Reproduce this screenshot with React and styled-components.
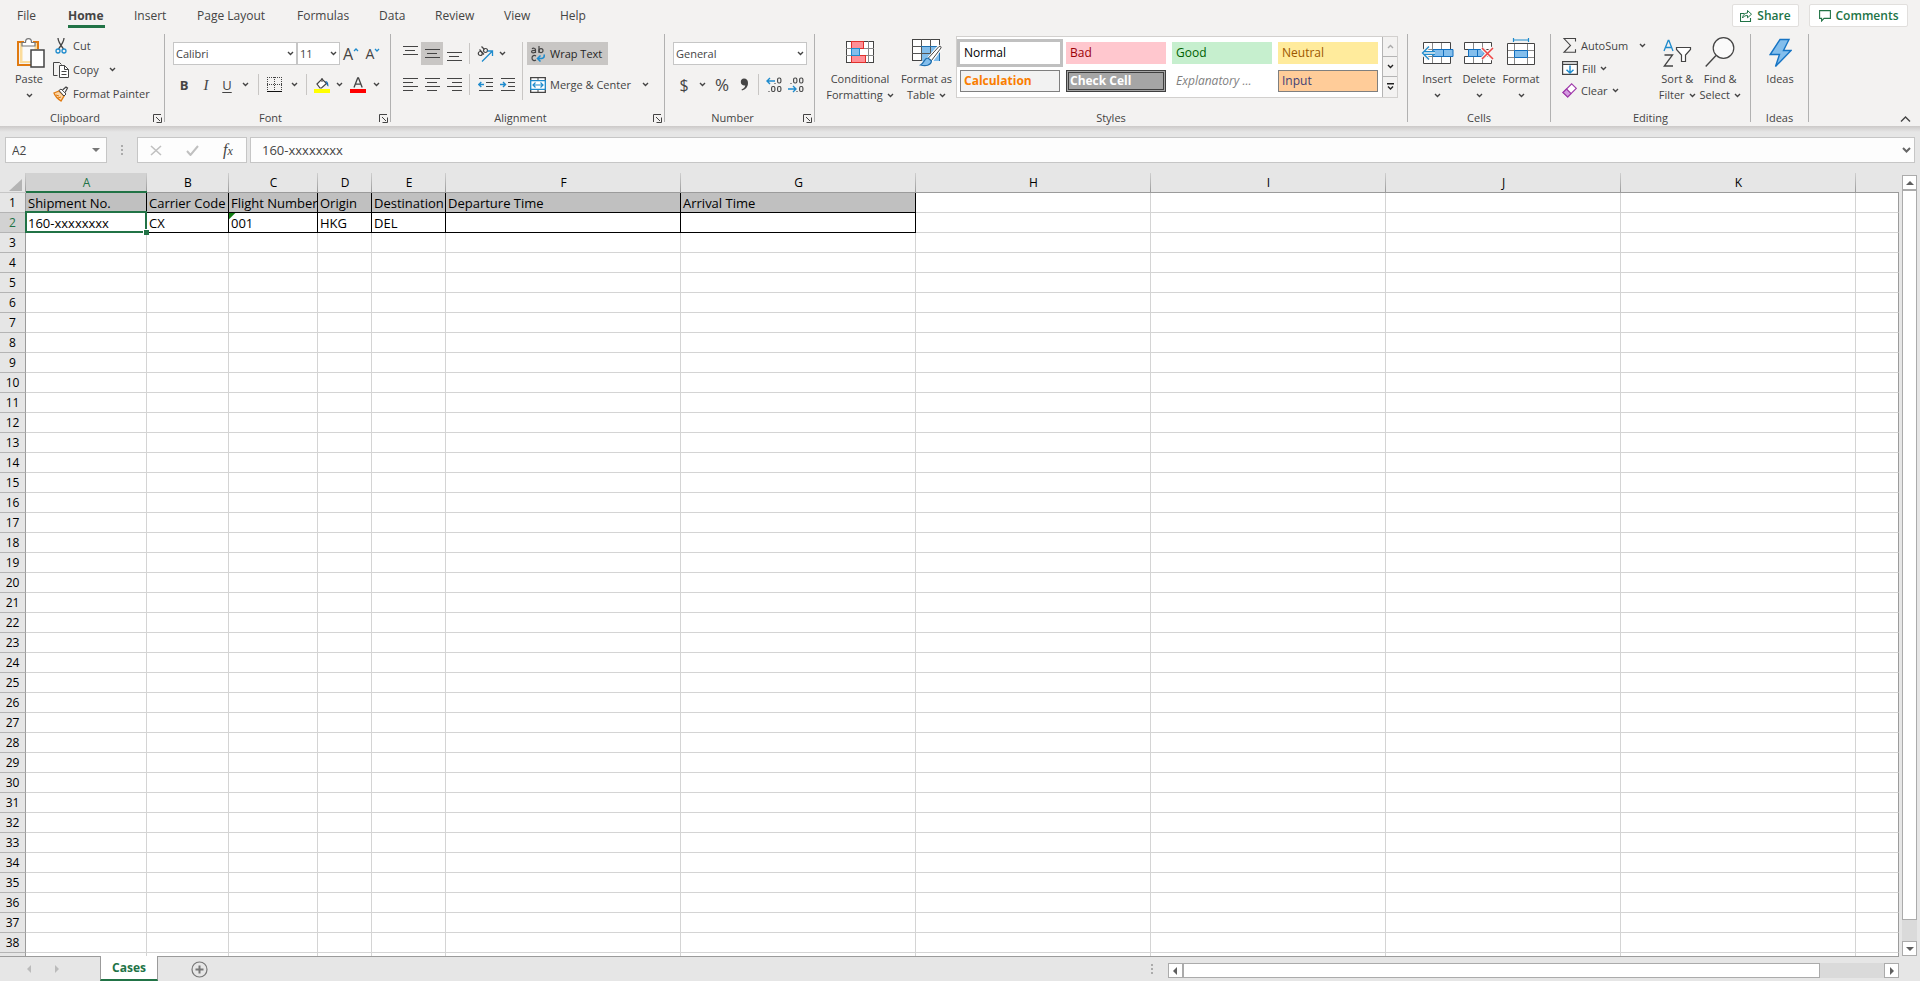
import React from 'react';
import styled, { createGlobalStyle, css } from 'styled-components';

const Global = createGlobalStyle`
  *, *::before, *::after { box-sizing: border-box; }
  html, body { margin: 0; padding: 0; }
  body, button, input, select {
    font-family: "Open Sans", "Noto Sans", sans-serif;
    font-size: 11px;
    color: #444;
  }
  button { background: none; border: 0; padding: 0; margin: 0; }
  svg { display: block; flex: none; }
`;

const INK = '#444444';
const GREEN = '#217346';
const BLUE = '#1e8bcd';

const Shell = styled.div`
  display: flex;
  flex-direction: column;
  height: 100vh;
  overflow: hidden;
  background: #e6e6e6;
`;

const Ribbon = styled.header`
  background: #f3f2f1;
  flex: none;
`;

const TopBar = styled.div`
  display: flex;
  height: 34px;
  padding: 4px 12px 0 0;
  justify-content: space-between;
`;

const Tabs = styled.nav`
  display: flex;
  gap: 29px;
  padding-left: 17px;
`;

const TabButton = styled.button`
  height: 24px;
  padding-top: 3px;
  font-size: 12px;
  line-height: 18px;
  width: ${(p) => p.$w}px;
  white-space: nowrap;
  text-align: left;
  border-bottom: 3px solid ${(p) => (p.$active ? GREEN : 'transparent')};
  font-weight: ${(p) => (p.$active ? 700 : 400)};
`;

const TopActions = styled.div`
  display: flex;
  gap: 10px;
`;

const ActionButton = styled.button`
  display: flex;
  align-items: center;
  justify-content: center;
  gap: 5px;
  width: ${(p) => p.$w}px;
  height: 23px;
  background: #fff;
  border: 1px solid #e1dfdd;
  border-radius: 2px;
  color: ${GREEN};
  font-size: 12px;
  font-weight: 600;
`;

const RibbonBody = styled.div`
  display: flex;
  height: 92px;
`;

const GroupBox = styled.section`
  display: flex;
  flex-direction: column;
  flex: none;
  width: ${(p) => p.$w}px;
  background: linear-gradient(#b1b1b1, #b1b1b1) right top / 1px 88px no-repeat;
`;

const GroupBody = styled.div`
  display: flex;
  height: 76px;
  padding: ${(p) => p.$pad || '0'};
`;

const GroupFooter = styled.div`
  display: flex;
  align-items: center;
  height: 16px;
  padding-right: 1px;
`;

const GroupLabel = styled.span`
  flex: 1;
  text-align: center;
  line-height: 16px;
`;

const Launcher = styled.button`
  width: 14px;
  height: 14px;
  display: grid;
  place-items: center;
`;

const Column = styled.div`
  display: flex;
  flex-direction: column;
  align-items: flex-start;
  gap: ${(p) => p.$gap || 0}px;
`;

const Row = styled.div`
  display: flex;
  align-items: center;
  height: 23px;
`;

const Tool = styled.button`
  display: flex;
  align-items: center;
  justify-content: ${(p) => (p.$start ? 'flex-start' : 'center')};
  gap: 4px;
  height: ${(p) => p.$h || 23}px;
  width: ${(p) => (p.$w ? p.$w + 'px' : 'auto')};
  padding-left: ${(p) => p.$pl || 0}px;
  white-space: nowrap;
  background: ${(p) => (p.$on ? '#c8c6c4' : 'transparent')};
  ${(p) => p.$on && css`color: #262626;`}
`;

const Glyph = styled.span`
  font-size: ${(p) => p.$size || 13}px;
  line-height: 18px;
  font-weight: ${(p) => (p.$bold ? 700 : 400)};
  font-style: ${(p) => (p.$italic ? 'italic' : 'normal')};
  font-family: ${(p) => (p.$serif ? '"Liberation Serif", serif' : 'inherit')};
  text-decoration: ${(p) => (p.$under ? 'underline' : 'none')};
  text-underline-offset: 2px;
`;

const Divider = styled.span`
  flex: none;
  width: 1px;
  height: ${(p) => p.$h || 21}px;
  background: #c8c6c4;
  margin: ${(p) => p.$m || '0'};
`;

const BigTool = styled.button`
  display: flex;
  flex-direction: column;
  align-items: center;
  width: ${(p) => p.$w}px;
  height: 74px;
  line-height: 16px;
  white-space: nowrap;
`;

const BigIcon = styled.span`
  display: grid;
  place-items: center;
  height: 37px;
`;

const LabelLine = styled.span`
  display: flex;
  align-items: center;
  gap: 4px;
  height: 16px;
`;

const SelectWrap = styled.div`
  display: grid;
  align-items: center;
  width: ${(p) => p.$w}px;
  height: 23px;
  background: #fff;
  border: 1px solid #c6c6c6;
  & > * { grid-area: 1 / 1; }
  & > svg { justify-self: end; margin-right: 2px; pointer-events: none; }
`;

const Select = styled.select`
  appearance: none;
  border: 0;
  background: transparent;
  width: 100%;
  height: 21px;
  padding: 0 14px 0 2px;
  line-height: 21px;
`;

const Gallery = styled.div`
  display: flex;
  height: 62px;
  margin-top: 2px;
  background: #fff;
  border: 1px solid #d2d0ce;
`;

const Swatches = styled.div`
  display: grid;
  grid-template-columns: repeat(4, 100px);
  grid-auto-rows: 22px;
  gap: 6px;
  padding: 5px 4px 0 3px;
`;

const Swatch = styled.button`
  text-align: left;
  padding-left: 3px;
  font-size: 12px;
  line-height: 18px;
  color: ${(p) => p.$fg};
  background: ${(p) => p.$bg};
  border: ${(p) => p.$border || '1px solid transparent'};
  font-weight: ${(p) => (p.$bold ? 700 : 400)};
  font-style: ${(p) => (p.$italic ? 'italic' : 'normal')};
  ${(p) => p.$double && css`
    box-shadow: inset 0 0 0 1px #a5a5a5, inset 0 0 0 2px #3f3f3f;
  `}
  ${(p) => p.$selected && css`outline: 3px solid #c0c0c0;`}
`;

const GalleryScroll = styled.div`
  display: grid;
  grid-template-rows: 20px 20px 20px;
  width: 15px;
`;

const GalleryButton = styled.button`
  display: grid;
  place-items: center;
  background: #f3f2f1;
  border-left: 1px solid #b4b4b4;
  border-bottom: 1px solid #b4b4b4;
  &:last-child { border-bottom: 0; }
`;

const Collapse = styled.button`
  margin: auto 8px 2px auto;
  width: 12px;
  height: 10px;
`;

const Shade = styled.div`
  flex: none;
  height: 11px;
  background: linear-gradient(#cbc9c8, #e6e6e6 6px);
`;

const FormulaRow = styled.div`
  display: flex;
  align-items: center;
  flex: none;
  height: 26px;
  padding: 0 5px;
`;

const Box = styled.div`
  display: flex;
  align-items: center;
  height: 26px;
  background: #fdfdfd;
  border: 1px solid #c6c6c6;
  ${(p) => (p.$w ? css`width: ${p.$w}px; flex: none;` : css`flex: 1;`)}
  justify-content: ${(p) => (p.$spread ? 'space-around' : 'flex-start')};
`;

const TextField = styled.input`
  flex: 1;
  min-width: 0;
  height: 24px;
  border: 0;
  outline: 0;
  background: transparent;
  font-size: ${(p) => p.$size || 12}px;
  padding: 0 0 0 ${(p) => p.$pl}px;
`;

const Handle = styled.span`
  flex: none;
  display: grid;
  place-items: center;
  width: ${(p) => p.$w || 31}px;
`;

const Workspace = styled.main`
  display: flex;
  flex: 1;
  min-height: 0;
  padding-top: 10px;
`;

const GridPane = styled.div`
  flex: 1;
  min-width: 0;
  overflow: hidden;
`;

const Sheet = styled.table`
  width: 100%;
  table-layout: fixed;
  border-collapse: separate;
  border-spacing: 0;
  font-size: 13px;
  color: #000;
`;

const ColHead = styled.th`
  height: 20px;
  padding: 0;
  font-weight: 400;
  font-size: 12px;
  line-height: 18px;
  color: ${(p) => (p.$on ? GREEN : '#000')};
  border-bottom: 1px solid #9b9b9b;
  background: linear-gradient(#cfcfcf, #9b9b9b) right top / ${(p) => (p.$last ? 0 : 1)}px 100% no-repeat #e6e6e6;
  ${(p) => p.$on && css`
    background-color: #d2d2d2;
    border-bottom: 2px solid ${GREEN};
    line-height: 17px;
  `}
`;

const Corner = styled.td`
  padding: 4px 3px 0 9px;
  background: linear-gradient(#cfcfcf, #9b9b9b) right top / 1px 100% no-repeat;
  border-bottom: 1px solid #c6c6c6;
`;

const RowHead = styled.th`
  height: 20px;
  padding: 1px 0 0;
  font-weight: 400;
  font-size: 12px;
  line-height: 18px;
  background: ${(p) => (p.$on ? '#d2d2d2' : '#e6e6e6')};
  color: ${(p) => (p.$on ? GREEN : '#000')};
  border-right: 1px solid #9b9b9b;
  border-bottom: 1px solid #b4b4b4;
`;

const Cell = styled.td`
  height: 20px;
  padding: 2px 0 0 2px;
  line-height: 17px;
  white-space: nowrap;
  overflow: hidden;
  background: ${(p) => (p.$head ? '#c0c0c0' : '#fff')};
  border-right: 1px solid ${(p) => (p.$box ? '#000' : p.$last ? '#9b9b9b' : '#d4d4d4')};
  border-bottom: 1px solid ${(p) => (p.$box ? '#000' : '#d4d4d4')};
  ${(p) => p.$flag && css`
    background: linear-gradient(135deg, #107c10 4px, transparent 5px) #fff;
  `}
  ${(p) => p.$selected && css`
    position: relative;
    overflow: visible;
    &::before {
      content: '';
      position: absolute;
      inset: -2px -1px -1px -1px;
      border: 2px solid ${GREEN};
    }
    &::after {
      content: '';
      position: absolute;
      right: -3px;
      bottom: -3px;
      width: 6px;
      height: 6px;
      background: ${GREEN};
      border-top: 1px solid #fff;
      border-left: 1px solid #fff;
    }
  `}
`;

const VScroll = styled.div`
  display: flex;
  flex-direction: column;
  flex: none;
  width: 15px;
  margin: 2px 3px 0 3px;
  background: #dadada;
`;

const ScrollButton = styled.button`
  display: grid;
  place-items: center;
  flex: none;
  width: 15px;
  height: 15px;
  background: #fff;
  border: 1px solid #ababab;
`;

const Thumb = styled.div`
  flex: ${(p) => p.$grow} 0 0;
  background: #fff;
  border: 1px solid #ababab;
`;

const Track = styled.div`
  flex: ${(p) => p.$grow} 0 0;
`;

const SheetBar = styled.footer`
  display: flex;
  flex: none;
  height: 25px;
`;

const SheetBarMain = styled.div`
  display: flex;
  flex: 1;
  border-top: 1px solid #9b9b9b;
`;

const SheetNav = styled.div`
  display: flex;
  align-items: center;
  gap: 16px;
  width: 100px;
  padding-left: 23px;
`;

const NavButton = styled.button`
  width: 12px;
  height: 16px;
  display: grid;
  place-items: center;
`;

const SheetTab = styled.button`
  width: 58px;
  margin-top: -1px;
  background: #fff;
  color: ${GREEN};
  font-size: 12px;
  font-weight: 700;
  border-left: 1px solid #9b9b9b;
  border-right: 1px solid #9b9b9b;
  border-bottom: 2px solid ${GREEN};
`;

const AddSheet = styled.button`
  display: grid;
  place-items: center;
  width: 18px;
  margin-left: 32px;
`;

const Grip = styled.span`
  display: grid;
  place-items: center;
  width: 9px;
  margin-left: auto;
  margin-right: 11px;
`;

const HScroll = styled.div`
  display: flex;
  width: 38.5%;
  height: 15px;
  margin: 6px 0 0;
  background: #dadada;
`;

const BarEnd = styled.div`
  width: 21px;
  flex: none;
`;

/* ---------- icons ---------- */

const Svg = ({ w, h, children, ...rest }) => (
  <svg width={w} height={h} viewBox={`0 0 ${w} ${h}`} fill="none" aria-hidden="true" {...rest}>
    {children}
  </svg>
);

const Chevron = ({ color = INK }) => (
  <Svg w={7} h={5}>
    <path d="M1 1l2.5 2.5L6 1" stroke={color} strokeWidth="1.4" />
  </Svg>
);

const LauncherIcon = () => (
  <Svg w={9} h={9}>
    <path d="M.5 8V.5H8M3 3l4 4M8.5 3.5v5h-5" stroke={INK} />
  </Svg>
);

const PasteIcon = () => (
  <Svg w={32} h={32}>
    <g transform="translate(4 0)">
      <path d="M3 6h17v7h-6v13H3z" fill="#fbdc9c" />
      <path d="M5.500 8h12v5H14v11H5.500z" fill="#fafafa" />
      <path d="M7 5H1v23h13M16 5h5v7" stroke="#e07a10" strokeWidth="2" />
      <path d="M5 9V5.500h3.500C8.500 3 10 1.700 11.500 1.700S14.500 3 14.500 5.500H18V9z" fill="#fff" stroke="#777" strokeWidth="1.200" />
      <path d="M14 13h13v17H14z" fill="#fff" stroke={INK} strokeWidth="1.500" />
    </g>
  </Svg>
);

const CutIcon = () => (
  <Svg w={16} h={16}>
    <path d="M5 0c0 3 1 5 5.500 11M11 0c0 3-1 5-5.500 11" stroke={INK} strokeWidth="1.300" />
    <circle cx="5" cy="13" r="2" stroke={BLUE} strokeWidth="1.300" />
    <circle cx="11" cy="13" r="2" stroke={BLUE} strokeWidth="1.300" />
  </Svg>
);

const CopyIcon = () => (
  <Svg w={16} h={16}>
    <path d="M4.500 13.500H.5V.5h6l2 2" stroke={INK} />
    <path d="M6.500 3.500h5l4 4v8h-9z" fill="#fff" stroke={INK} />
    <path d="M11.500 3.500v4h4M8.500 9.500h5M8.500 12.500h5" stroke={INK} />
  </Svg>
);

const PainterIcon = () => (
  <Svg w={16} h={16}>
    <path d="M1 7l5-2 5 5-3 5C5 13 2 10 1 7z" fill="#fbd5a5" stroke="#e07a10" strokeWidth="1.300" />
    <path d="M3 9l3 1M5 12l3-1" stroke="#e07a10" />
    <path d="M6 4.500l2-1.500 5 5-2 2z" fill="#fff" stroke={INK} />
    <path d="M9.500 4L13 1l1.500 1L12 6.500" fill="#fff" stroke={INK} strokeWidth="1.200" />
  </Svg>
);

const Caret = ({ up }) => (
  <Svg w={6} h={14}>
    <path d={up ? 'M1 4l2-2 2 2' : 'M1 2l2 2 2-2'} stroke={BLUE} strokeWidth="1.300" />
  </Svg>
);

const BorderIcon = () => (
  <Svg w={15} h={15} shapeRendering="crispEdges">
    <path d="M0 .5h15M.5 0v14M14.500 0v14M7.500 0v14M0 7.500h15" stroke={INK} strokeDasharray="1 1" />
    <path d="M0 14.500h15" stroke="#111" />
  </Svg>
);

const FillIcon = () => (
  <Svg w={16} h={16}>
    <path d="M3 7l5-5 4.500 4.500-5 4.500H6z" fill="#fff" stroke={INK} strokeWidth="1.200" />
    <path d="M8 1v4" stroke={INK} />
    <path d="M11 4c2 0 3.500 1 3.500 5.500-1.500-.5-2-2-2.200-4z" fill="#1e6fb0" />
    <path d="M0 12h16v4H0z" fill="#ffff00" />
  </Svg>
);

const FontColorIcon = () => (
  <Svg w={16} h={16}>
    <path d="M4 10.500L7.700 1h.8l3.700 9.500M5.300 7.200h5.600" stroke={INK} strokeWidth="1.300" />
    <path d="M0 12h16v4H0z" fill="#ff0000" />
  </Svg>
);

const Lines = ({ rows, w = 15, h = 15 }) => (
  <Svg w={w} h={h} shapeRendering="crispEdges">
    {rows.map(([x, y, len]) => (
      <path key={y} d={`M${x} ${y}.5h${len}`} stroke={INK} />
    ))}
  </Svg>
);

const OrientIcon = () => (
  <Svg w={17} h={16}>
    <g stroke={INK} strokeWidth="1.200">
      <circle cx="3.300" cy="7.500" r="2" />
      <path d="M2.500 3.500l4.500 5" />
      <circle cx="8.500" cy="4.500" r="2" />
      <path d="M4.500.5l3 3" />
    </g>
    <path d="M5 15.500L15.500 5M10.500 5h5v5" stroke={BLUE} strokeWidth="1.300" />
  </Svg>
);

const IndentIcon = ({ right }) => (
  <Svg w={15} h={15}>
    <path d="M1 1.500h14M8 5.500h7M8 9.500h7M1 13.500h14" stroke={INK} />
    <path d={right ? 'M0 7.500h5.500M3 5l2.500 2.500L3 10' : 'M6 7.500H.8M3.300 5L.8 7.500 3.300 10'} stroke={BLUE} strokeWidth="1.400" />
  </Svg>
);

const WrapIcon = () => (
  <Svg w={15} h={16}>
    <g stroke={INK} strokeWidth="1.200">
      <path d="M1 2.800C2 1.800 4.500 2 4.500 3.800V7M4.500 4.500C1 4.300.6 5 .6 5.700c0 1.500 3 1.500 3.900 0" />
      <path d="M8 0v7" />
      <ellipse cx="10" cy="4.700" rx="2" ry="2" />
      <path d="M5 10C3.500 9 1 9.300 1 12s2.500 3 4 2" />
    </g>
    <path d="M13 8.500c1 3-1 4.500-6 4M9.500 9.500L6.500 12.500l3 3" stroke={BLUE} strokeWidth="1.500" />
  </Svg>
);

const MergeIcon = () => (
  <Svg w={16} h={16}>
    <path d="M.7.7h14.600v14.600H.7z" fill="#fff" stroke={INK} strokeWidth="1.300" />
    <path d="M8 0v4M8 12v4" stroke={INK} />
    <path d="M.7 3.700h14.600v8.600H.7z" fill="#fff" stroke={BLUE} strokeWidth="1.300" />
    <path d="M3 8h10M5.500 5.500L3 8l2.500 2.500M10.500 5.500L13 8l-2.500 2.500" stroke={BLUE} strokeWidth="1.200" />
  </Svg>
);

const DecimalIcon = ({ less }) => (
  <Svg w={16} h={16}>
    <g stroke={INK} strokeWidth="1.100">
      {less ? (
        <>
          <rect x="5.600" y="1" width="3.300" height="5" rx="1.400" />
          <rect x="11.600" y="1" width="3.300" height="5" rx="1.400" />
          <rect x="11.600" y="9.500" width="3.300" height="5" rx="1.400" />
          <path d="M3 6v1M9 14v1" />
        </>
      ) : (
        <>
          <rect x="11.600" y="1" width="3.300" height="5" rx="1.400" />
          <rect x="5.600" y="9.500" width="3.300" height="5" rx="1.400" />
          <rect x="11.600" y="9.500" width="3.300" height="5" rx="1.400" />
          <path d="M3 14v1M9 6v1" />
        </>
      )}
    </g>
    <path
      d={less ? 'M0 12h8M5 9l3 3-3 3' : 'M9 4H1M4 1L1 4l3 3'}
      stroke={BLUE}
      strokeWidth="1.400"
    />
  </Svg>
);

const CommaIcon = () => (
  <Svg w={9} h={13}>
    <path d="M4 .5C6.500.5 8 2 8 5c0 4-2.500 6.500-6 7.500l-.5-1C3.500 10.500 5 9.500 5.300 7.500 3 8 .8 6.500.8 4 .8 2 2 .5 4 .5z" fill={INK} />
  </Svg>
);

const CondIcon = () => (
  <Svg w={28} h={23} shapeRendering="crispEdges">
    <path d="M.5.5h27v21H.5z" fill="#fff" stroke={INK} />
    <path d="M0 7.500h28M0 14.500h28M5.500 0v22M22.500 0v22" stroke="#888" />
    <path d="M5.500.5h12v7h-12zM5.500 14.500h14v7h-14z" fill="#ff8f96" stroke="#e0312c" />
    <path d="M5.500 7.500h8v7h-8z" fill="#83beec" stroke={BLUE} />
  </Svg>
);

const TableIcon = () => (
  <Svg w={30} h={28}>
    <g shapeRendering="crispEdges">
      <path d="M.5.5h27v21H.5z" fill="#fff" stroke={INK} />
      <path d="M9 7h19v15H9z" fill="#83beec" />
      <path d="M0 7.500h28M0 14.500h28M9.500 0v22M18.500 0v22" stroke="#555" />
      <path d="M9 7.500h18.500v14" stroke="#1e6fb0" />
    </g>
    <path d="M16 20L27 7.500c1.500-.8 2.500 0 2 1.500L19.500 22z" fill="#fff" stroke="#fff" strokeWidth="3" />
    <path d="M16 19.500L27 7.500c1.500-.8 2.500 0 2 1.500L19.500 21.500z" fill="#fff" stroke={INK} />
    <path d="M16 19c-4 0-3.500 5-7.500 7 5 1.500 10.500.5 11-4z" fill="#83beec" stroke="#1e6fb0" strokeWidth="1.200" />
  </Svg>
);

const InsertIcon = () => (
  <Svg w={33} h={28}>
    <path d="M2.500 3.500h27v21h-27z" fill="#fff" stroke={INK} />
    <path d="M11.500 4v20M20.500 4v20M3 10.500h27M3 17.500h27" stroke="#888" />
    <path d="M12 10.500h20v7H12zM22.500 10.500v7" fill="#83beec" stroke="#106ebe" />
    <path d="M14 14H1.500M7.500 7.500L1.500 14l6 6.500" stroke="#f3f2f1" strokeWidth="4" />
    <path d="M14 12.700H3M14 15.300H3M8 7.500L1.500 14l6.500 6.500" stroke={BLUE} strokeWidth="1.300" />
  </Svg>
);

const DeleteIcon = () => (
  <Svg w={31} h={28}>
    <path d="M.5 3.500h27v7H.5zM.5 17.500h27v7H.5z" fill="#fff" stroke={INK} />
    <path d="M9.500 4v6M18.500 4v6M9.500 18v6M18.500 18v6" stroke="#888" />
    <path d="M0 11h29v6H0z" fill="#f3f2f1" />
    <path d="M4.500 10.500h13l3 3.500-3 3.500h-13zM13.500 10.500v7" fill="#83beec" stroke="#106ebe" />
    <path d="M18 9l11 11M29 9L18 20" stroke="#f3f2f1" strokeWidth="4" />
    <path d="M18 9l11 11M29 9L18 20" stroke="#ee4444" strokeWidth="1.500" />
  </Svg>
);

const FormatIcon = () => (
  <Svg w={28} h={30}>
    <path d="M6.500 2h15M6.500 0v4M21.500 0v4" stroke={BLUE} strokeWidth="1.200" />
    <path d="M.5 5.500h27v21H.5z" fill="#fff" stroke={INK} />
    <path d="M7.500 6v20M20.500 6v20M1 12.500h26M1 19.500h26" stroke="#888" />
    <path d="M7.500 12.500h13v7h-13z" fill="#83beec" stroke="#106ebe" />
  </Svg>
);

const SigmaIcon = () => (
  <Svg w={15} h={15}>
    <path d="M13.500 3.500v-3H2L8.500 7.500 2 14.300h11.500v-3" stroke={INK} strokeWidth="1.100" />
  </Svg>
);

const FillDownIcon = () => (
  <Svg w={16} h={14}>
    <path d="M.6.6h14.800v12.800H.6zM0 3.300h16" fill="#fff" stroke={INK} strokeWidth="1.200" />
    <path d="M8 4.500V12M4.500 8.700L8 12l3.500-3.300" stroke={BLUE} strokeWidth="1.500" />
  </Svg>
);

const EraserIcon = () => (
  <Svg w={15} h={15}>
    <path d="M9.700.8l4.600 4.600-8.600 8.600L1 9.500z" fill="#fff" stroke="#a03cab" strokeWidth="1.200" />
    <path d="M4.500 6L9 10.600 5.700 14 1 9.500z" fill="#d49be0" stroke="#a03cab" strokeWidth="1.200" />
  </Svg>
);

const SortIcon = () => (
  <Svg w={29} h={28}>
    <path d="M1 12L5.200 1.500h.7L10 12M2.300 8.500h6.500" stroke={BLUE} strokeWidth="1.300" />
    <path d="M1.500 16h8L1.300 27h8.700" stroke={INK} strokeWidth="1.300" />
    <path d="M13.500 8.500h14v2l-5 5.500v6.500h-4V16l-5-5.500z" fill="#fff" stroke={INK} strokeWidth="1.200" />
  </Svg>
);

const FindIcon = () => (
  <Svg w={30} h={31}>
    <circle cx="18.500" cy="11" r="10.300" fill="#fafafa" stroke={INK} strokeWidth="1.200" />
    <path d="M11 18.500L.7 29.500" stroke={INK} strokeWidth="1.300" />
  </Svg>
);

const BoltIcon = () => (
  <Svg w={23} h={30}>
    <path d="M11 1.500h9L14.500 12.500H22L6.500 28.500l4-12H1.200z" fill="#83beec" stroke="#1674c4" strokeWidth="1.400" />
  </Svg>
);

const ShareIcon = () => (
  <Svg w={12} h={13}>
    <path d="M4.500 4.500h-4v8h10V9" stroke={GREEN} strokeWidth="1.100" />
    <path d="M2.500 9C3 5.500 5 4 7.500 4V1.500l4 3.700-4 3.600V6.500C5.500 6.500 4 7 2.500 9z" stroke={GREEN} />
  </Svg>
);

const CommentIcon = () => (
  <Svg w={12} h={12}>
    <path d="M.6.6h10.800v7.800H5L2.600 11V8.400h-2z" stroke={GREEN} strokeWidth="1.100" />
  </Svg>
);

const Arrow = ({ dir, color = '#5f5f5f', size = 8 }) => {
  const d = {
    up: 'M0 6l4-4 4 4z',
    down: 'M0 2l4 4 4-4z',
    left: 'M6 0L2 4l4 4z',
    right: 'M2 0l4 4-4 4z',
  }[dir];
  return (
    <svg width={size} height={size} viewBox="0 0 8 8" aria-hidden="true">
      <path d={d} fill={color} />
    </svg>
  );
};

const Dots = () => (
  <Svg w={3} h={11}>
    <path d="M0 0h2v2H0zM0 4h2v2H0zM0 8h2v2H0z" fill="#ababab" />
  </Svg>
);

/* ---------- composed parts ---------- */

const Group = ({ label, w, pad, launcher, children }) => (
  <GroupBox $w={w} aria-label={label}>
    <GroupBody $pad={pad}>{children}</GroupBody>
    <GroupFooter>
      <GroupLabel>{label}</GroupLabel>
      {launcher && (
        <Launcher aria-label={`${label} settings`}>
          <LauncherIcon />
        </Launcher>
      )}
    </GroupFooter>
  </GroupBox>
);

const Big = ({ icon, lines, arrow, w }) => (
  <BigTool $w={w}>
    <BigIcon>{icon}</BigIcon>
    {lines.map((line, i) => (
      <LabelLine key={line}>
        {line}
        {arrow === 'inline' && i === lines.length - 1 && <Chevron />}
      </LabelLine>
    ))}
    {arrow === 'below' && (
      <LabelLine>
        <Chevron />
      </LabelLine>
    )}
  </BigTool>
);

const DropTool = ({ w = 16, label }) => (
  <Tool $w={w} aria-label={label}>
    <Chevron />
  </Tool>
);

const tabs = [
  ['File', 22], ['Home', 37], ['Insert', 34], ['Page Layout', 71], ['Formulas', 53],
  ['Data', 27], ['Review', 40], ['View', 27], ['Help', 27],
];

const swatches = [
  { name: 'Normal', fg: '#000', bg: '#fff', selected: true },
  { name: 'Bad', fg: '#9c0006', bg: '#ffc7ce' },
  { name: 'Good', fg: '#006100', bg: '#c6efce' },
  { name: 'Neutral', fg: '#9c5700', bg: '#ffeb9c' },
  { name: 'Calculation', fg: '#fa7d00', bg: '#f2f2f2', border: '1px solid #7f7f7f', bold: true },
  { name: 'Check Cell', fg: '#fff', bg: '#a5a5a5', border: '1px solid #3f3f3f', bold: true, double: true },
  { name: 'Explanatory ...', fg: '#7f7f7f', bg: '#fff', italic: true },
  { name: 'Input', fg: '#3f3f76', bg: '#ffcc99', border: '1px solid #7f7f7f' },
];

const columns = [
  ['A', 121], ['B', 82], ['C', 89], ['D', 54], ['E', 74], ['F', 235], ['G', 235],
  ['H', 235], ['I', 235], ['J', 235], ['K', 235],
];

const data = [
  ['Shipment No.', 'Carrier Code', 'Flight Number', 'Origin', 'Destination', 'Departure Time', 'Arrival Time'],
  ['160-xxxxxxxx', 'CX', '001', 'HKG', 'DEL', '', ''],
];

const FULL_ROWS = 38;

const TOP_LINES = [[0, 0, 15], [2, 4, 10], [0, 8, 15]];
const LOW_LINES = [[0, 6, 15], [2, 10, 10], [0, 14, 15]];
const MID_LINES = [[0, 3, 15], [2, 7, 10], [0, 11, 15]];
const LEFT = [[0, 1, 15], [0, 5, 10], [0, 9, 15], [0, 13, 10]];
const CENTER = [[0, 1, 15], [2, 5, 10], [0, 9, 15], [2, 13, 10]];
const RIGHT = [[0, 1, 15], [5, 5, 10], [0, 9, 15], [5, 13, 10]];

const SheetGrid = () => (
  <Sheet>
    <colgroup>
      <col style={{ width: 26 }} />
      {columns.map(([name, width]) => (
        <col key={name} style={{ width }} />
      ))}
      <col />
    </colgroup>
    <thead>
      <tr>
        <Corner>
          <Svg w={13} h={12}>
            <path d="M13 0v12H0z" fill="#b4b4b4" />
          </Svg>
        </Corner>
        {columns.map(([name]) => (
          <ColHead key={name} scope="col" $on={name === 'A'}>{name}</ColHead>
        ))}
        <ColHead $last />
      </tr>
    </thead>
    <tbody>
      {Array.from({ length: FULL_ROWS + 1 }, (_, r) => (
        <tr key={r}>
          <RowHead scope="row" $on={r === 1}>{r < FULL_ROWS ? r + 1 : null}</RowHead>
          {columns.map(([name], c) => {
            const filled = r < 2 && c < 7;
            return (
              <Cell
                key={name}
                $box={filled}
                $head={filled && r === 0}
                $selected={r === 1 && c === 0}
                $flag={r === 1 && c === 2}
              >
                {filled ? data[r][c] : null}
              </Cell>
            );
          })}
          <Cell $last />
        </tr>
      ))}
    </tbody>
  </Sheet>
);

export default function App() {
  return (
    <Shell>
      <Global />
      <Ribbon>
        <TopBar>
          <Tabs>
            {tabs.map(([name, w]) => (
              <TabButton key={name} $w={w} $active={name === 'Home'}>{name}</TabButton>
            ))}
          </Tabs>
          <TopActions>
            <ActionButton $w={67}><ShareIcon />Share</ActionButton>
            <ActionButton $w={99}><CommentIcon />Comments</ActionButton>
          </TopActions>
        </TopBar>

        <RibbonBody>
          <Group label="Clipboard" w={165} pad="0 0 0 8px" launcher>
            <Big w={42} icon={<PasteIcon />} lines={['Paste']} arrow="below" />
            <Column $gap={1}>
              <Tool $pl={3} $start><CutIcon />Cut</Tool>
              <Row>
                <Tool $pl={3} $start><CopyIcon />Copy</Tool>
                <DropTool w={27} label="Copy options" />
              </Row>
              <Tool $pl={3} $start><PainterIcon />Format Painter</Tool>
            </Column>
          </Group>

          <Group label="Font" w={226} pad="8px 0 0 8px" launcher>
            <Column $gap={8}>
              <Row>
                <SelectWrap $w={124}>
                  <Select aria-label="Font name"><option>Calibri</option></Select>
                  <Chevron />
                </SelectWrap>
                <SelectWrap $w={43}>
                  <Select aria-label="Font size"><option>11</option></Select>
                  <Chevron />
                </SelectWrap>
                <Tool $w={22} aria-label="Grow font"><Row><Glyph $size={16}>A</Glyph><Caret up /></Row></Tool>
                <Tool $w={22} aria-label="Shrink font"><Row><Glyph $size={14}>A</Glyph><Caret /></Row></Tool>
              </Row>
              <Row>
                <Tool $w={22} aria-label="Bold"><Glyph $bold>B</Glyph></Tool>
                <Tool $w={22} aria-label="Italic"><Glyph $italic $serif $size={15}>I</Glyph></Tool>
                <Tool $w={20} aria-label="Underline"><Glyph $under>U</Glyph></Tool>
                <DropTool label="Underline options" />
                <Divider $m="0 4px 0 5px" />
                <Tool $w={23} aria-label="Borders"><BorderIcon /></Tool>
                <DropTool label="Border options" />
                <Divider $m="0 4px" />
                <Tool $w={22} aria-label="Fill color"><FillIcon /></Tool>
                <DropTool w={13} label="Fill color options" />
                <Tool $w={24} aria-label="Font color"><FontColorIcon /></Tool>
                <DropTool w={13} label="Font color options" />
              </Row>
            </Column>
          </Group>

          <Group label="Alignment" w={274} pad="8px 0 0 8px" launcher>
            <Column $gap={8}>
              <Row>
                <Tool $w={22} aria-label="Top align"><Lines rows={TOP_LINES} /></Tool>
                <Tool $w={22} $on aria-label="Middle align"><Lines rows={MID_LINES} /></Tool>
                <Tool $w={22} aria-label="Bottom align"><Lines rows={LOW_LINES} /></Tool>
                <Divider $m="0 4px" />
                <Tool $w={22} aria-label="Orientation"><OrientIcon /></Tool>
                <DropTool w={13} label="Orientation options" />
              </Row>
              <Row>
                <Tool $w={22} aria-label="Align left"><Lines rows={LEFT} /></Tool>
                <Tool $w={22} aria-label="Center"><Lines rows={CENTER} /></Tool>
                <Tool $w={22} aria-label="Align right"><Lines rows={RIGHT} /></Tool>
                <Divider $m="0 4px" />
                <Tool $w={22} aria-label="Decrease indent"><IndentIcon /></Tool>
                <Tool $w={22} aria-label="Increase indent"><IndentIcon right /></Tool>
              </Row>
            </Column>
            <Divider $h={58} $m="0 4px 0 4px" />
            <Column $gap={8}>
              <Row>
                <Tool $w={81} $pl={4} $start $on><WrapIcon />Wrap Text</Tool>
              </Row>
              <Row>
                <Tool $pl={3} $start><MergeIcon />Merge &amp; Center</Tool>
                <DropTool w={30} label="Merge options" />
              </Row>
            </Column>
          </Group>

          <Group label="Number" w={150} pad="8px 0 0 8px" launcher>
            <Column $gap={8}>
              <Row>
                <SelectWrap $w={134}>
                  <Select aria-label="Number format"><option>General</option></Select>
                  <Chevron />
                </SelectWrap>
              </Row>
              <Row>
                <Tool $w={22} aria-label="Currency"><Glyph $size={16}>$</Glyph></Tool>
                <DropTool w={14} label="Currency options" />
                <Tool $w={26} aria-label="Percent"><Glyph $size={17}>%</Glyph></Tool>
                <Tool $w={18} aria-label="Comma style"><CommaIcon /></Tool>
                <Divider $m="0 4px 0 5px" />
                <Tool $w={22} aria-label="Increase decimal"><DecimalIcon /></Tool>
                <Tool $w={22} aria-label="Decrease decimal"><DecimalIcon less /></Tool>
              </Row>
            </Column>
          </Group>

          <Group label="Styles" w={593} pad="0 0 0 8px">
            <Big w={74} icon={<CondIcon />} lines={['Conditional', 'Formatting']} arrow="inline" />
            <Big w={59} icon={<TableIcon />} lines={['Format as', 'Table']} arrow="inline" />
            <Gallery>
              <Swatches>
                {swatches.map((s) => (
                  <Swatch
                    key={s.name}
                    $fg={s.fg}
                    $bg={s.bg}
                    $border={s.border}
                    $bold={s.bold}
                    $italic={s.italic}
                    $double={s.double}
                    $selected={s.selected}
                  >
                    {s.name}
                  </Swatch>
                ))}
              </Swatches>
              <GalleryScroll>
                <GalleryButton aria-label="Previous styles">
                  <Svg w={7} h={5}><path d="M1 4l2.500-2.500L6 4" stroke="#aaa" strokeWidth="1.400" /></Svg>
                </GalleryButton>
                <GalleryButton aria-label="Next styles"><Chevron color="#222" /></GalleryButton>
                <GalleryButton aria-label="More styles">
                  <Svg w={7} h={8}><path d="M0 .7h7M1 3.500l2.500 2.500L6 3.500" stroke="#222" strokeWidth="1.400" /></Svg>
                </GalleryButton>
              </GalleryScroll>
            </Gallery>
          </Group>

          <Group label="Cells" w={143} pad="0 0 0 8px">
            <Big w={42} icon={<InsertIcon />} lines={['Insert']} arrow="below" />
            <Big w={42} icon={<DeleteIcon />} lines={['Delete']} arrow="below" />
            <Big w={42} icon={<FormatIcon />} lines={['Format']} arrow="below" />
          </Group>

          <Group label="Editing" w={200} pad="0 0 0 8px">
            <Column>
              <Row>
                <Tool $h={21} $pl={3} $start><SigmaIcon />AutoSum</Tool>
                <DropTool w={28} label="AutoSum options" />
              </Row>
              <Tool $h={22} $pl={3} $start><FillDownIcon />Fill<Chevron /></Tool>
              <Tool $pl={3} $start><EraserIcon />Clear<Chevron /></Tool>
            </Column>
            <Big w={42} icon={<SortIcon />} lines={['Sort &', 'Filter']} arrow="inline" />
            <Big w={44} icon={<FindIcon />} lines={['Find &', 'Select']} arrow="inline" />
          </Group>

          <Group label="Ideas" w={58} pad="0 0 0 8px">
            <Big w={42} icon={<BoltIcon />} lines={['Ideas']} />
          </Group>

          <Collapse aria-label="Collapse ribbon">
            <Svg w={11} h={8}><path d="M1 6.500L5.500 2 10 6.500" stroke={INK} strokeWidth="1.400" /></Svg>
          </Collapse>
        </RibbonBody>
      </Ribbon>

      <Shade />
      <FormulaRow>
        <Box $w={102}>
          <TextField aria-label="Name box" defaultValue="A2" $pl={6} />
          <Handle $w={20}><Arrow dir="down" color="#777" /></Handle>
        </Box>
        <Handle $w={30}><Dots /></Handle>
        <Box $w={110} $spread>
          <Tool $w={24} aria-label="Cancel">
            <Svg w={12} h={11}><path d="M1 1l10 9M11 1L1 10" stroke="#c0c0c0" strokeWidth="1.600" /></Svg>
          </Tool>
          <Tool $w={24} aria-label="Enter">
            <Svg w={13} h={11}><path d="M1 6l3.500 4L12 1" stroke="#c0c0c0" strokeWidth="2" /></Svg>
          </Tool>
          <Tool $w={24} aria-label="Insert function">
            <Glyph $serif $italic $size={16}>f<Glyph $serif $italic $size={12}>x</Glyph></Glyph>
          </Tool>
        </Box>
        <Handle $w={3} />
        <Box>
          <TextField aria-label="Formula" defaultValue="160-xxxxxxxx" $pl={11} $size={13} />
          <Handle $w={16}>
            <Svg w={9} h={6}><path d="M1 1l3.500 3.500L8 1" stroke="#666" strokeWidth="2" /></Svg>
          </Handle>
        </Box>
      </FormulaRow>

      <Workspace>
        <GridPane><SheetGrid /></GridPane>
        <VScroll>
          <ScrollButton aria-label="Scroll up"><Arrow dir="up" /></ScrollButton>
          <Thumb $grow={731} />
          <Track $grow={21} />
          <ScrollButton aria-label="Scroll down"><Arrow dir="down" /></ScrollButton>
        </VScroll>
      </Workspace>

      <SheetBar>
        <SheetBarMain>
          <SheetNav>
            <NavButton aria-label="Previous sheet"><Arrow dir="left" color="#bbb" /></NavButton>
            <NavButton aria-label="Next sheet"><Arrow dir="right" color="#bbb" /></NavButton>
          </SheetNav>
          <SheetTab>Cases</SheetTab>
          <AddSheet aria-label="New sheet">
            <Svg w={17} h={17}>
              <circle cx="8.500" cy="8.500" r="7.500" stroke="#777" strokeWidth="1.200" />
              <path d="M8.500 4.500v8M4.500 8.500h8" stroke="#777" strokeWidth="2" />
            </Svg>
          </AddSheet>
          <Grip><Dots /></Grip>
          <HScroll>
            <ScrollButton aria-label="Scroll left"><Arrow dir="left" /></ScrollButton>
            <Thumb $grow={636} />
            <Track $grow={64} />
            <ScrollButton aria-label="Scroll right"><Arrow dir="right" /></ScrollButton>
          </HScroll>
        </SheetBarMain>
        <BarEnd />
      </SheetBar>
    </Shell>
  );
}
